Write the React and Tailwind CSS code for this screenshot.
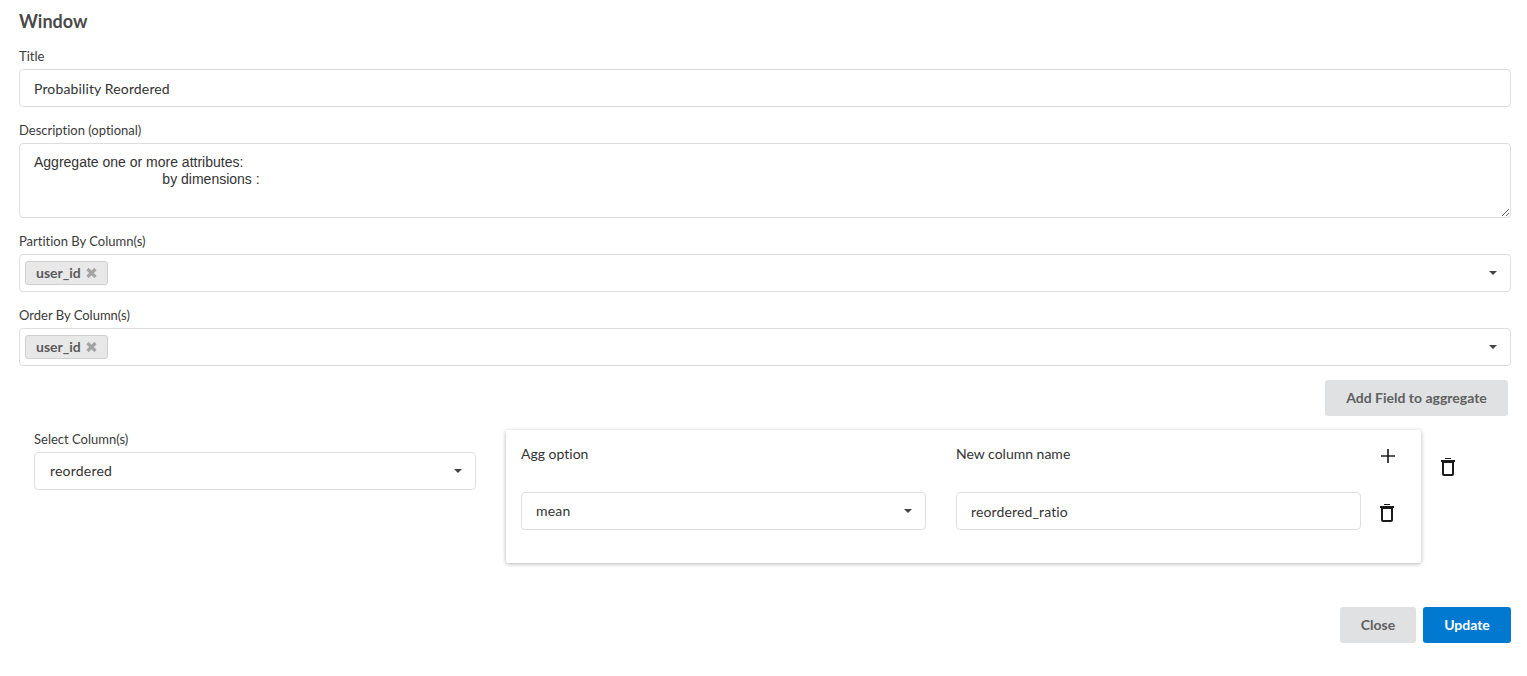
import React from "react";

function Caret() {
  return (
    <svg width="8" height="4" viewBox="0 0 8 4" className="shrink-0">
      <path d="M0 0h8L4 4z" fill="#444" />
    </svg>
  );
}

function Trash() {
  return (
    <svg width="14" height="18" viewBox="0 0 14 18" fill="none" stroke="#1b1b1b" strokeWidth="2">
      <path d="M0 3h14" />
      <path d="M4 .5h6" strokeWidth="1" />
      <path d="M2 4h10v12a1 1 0 0 1-1 1H3a1 1 0 0 1-1-1z" />
    </svg>
  );
}

function Plus() {
  return (
    <svg width="14" height="14" viewBox="0 0 14 14" stroke="#222" strokeWidth="1.7">
      <path d="M7 0v14M0 7h14" />
    </svg>
  );
}

function Label({ children }) {
  return <div className="h-[26px] pt-[4px] text-[13px] leading-[18px] text-[#3a3a3a]">{children}</div>;
}

function Chip() {
  return (
    <span className="flex h-[24px] w-[83px] items-center rounded-[3px] border border-[#cfcfcf] bg-[#e8e8e8] pl-[10px] pb-[1px] text-[14px] font-bold text-[#5b5b5b]">
      user_id
      <svg width="11" height="10" viewBox="0 0 11 10" className="ml-[5px] mt-[1px]" stroke="#a3a3a3" strokeWidth="3.2">
        <path d="M1.5 1l8 8M9.5 1l-8 8" />
      </svg>
    </span>
  );
}

function TagSelect() {
  return (
    <div className="flex h-[38px] items-center justify-between rounded-[4px] border border-[#dedede] pl-[5px] pr-[13px]">
      <Chip />
      <Caret />
    </div>
  );
}

function ValueSelect({ value, className = "" }) {
  return (
    <div className={"flex h-[38px] items-center justify-between rounded-[4px] border border-[#dedede] pr-[13px] text-[14px] text-[#333] tracking-[0.2px] " + className}>
      <span className="pb-[1px]">{value}</span>
      <Caret />
    </div>
  );
}

function TextInput({ value, className = "" }) {
  return (
    <input
      readOnly
      value={value}
      className={"block h-[38px] rounded-[4px] border border-[#dedede] px-[14px] text-[14px] text-[#333] tracking-[0.14px] outline-none " + className}
    />
  );
}

export default function App() {
  return (
    <div className="h-[676px] bg-white pl-[19px] pr-[16px] font-['Lato','Open_Sans',sans-serif] text-[#333] [font-variant-ligatures:none]">
      <h1 className="h-[43px] pt-[10px] text-[18px] leading-[23px] font-bold text-[#4a4a4a]">Window</h1>

      <Label>Title</Label>
      <TextInput value="Probability Reordered" className="w-full" />
      <div className="h-[10px]" />

      <Label>Description (optional)</Label>
      <textarea
        readOnly
        className="block h-[75px] w-full resize-y rounded-[4px] border border-[#dedede] px-[14px] pt-[10px] font-['Liberation_Sans',sans-serif] text-[14px] leading-[17px] text-[#333] outline-none"
        value={"Aggregate one or more attributes: \n                                 by dimensions : "}
      />
      <div className="h-[10px]" />

      <Label>Partition By Column(s)</Label>
      <TagSelect />
      <div className="h-[10px]" />

      <Label>Order By Column(s)</Label>
      <TagSelect />

      <div className="flex justify-end pt-[14px] pr-[3px]">
        <button className="h-[36px] w-[183px] rounded-[3px] bg-[#e0e1e2] pb-[1px] text-[14px] font-bold text-[#5f5f5f]">
          Add Field to aggregate
        </button>
      </div>

      <div className="flex items-start pt-[14px] pl-[15px]">
        <div className="w-[442px]">
          <div className="h-[22px] text-[13px] leading-[18px] text-[#3a3a3a]">Select Column(s)</div>
          <ValueSelect value="reordered" className="pl-[15px]" />
        </div>

        <div className="ml-[30px] h-[133px] w-[915px] rounded-[2px] bg-white pl-[15px] pt-[14px] shadow-[0_1px_4px_rgba(0,0,0,0.3)]">
          <div className="flex h-[48px] items-start">
            <div className="w-[435px] text-[14px] leading-[20px]">Agg option</div>
            <div className="w-[405px] text-[14px] leading-[20px]">New column name</div>
            <div className="ml-[20px] mt-[5px]"><Plus /></div>
          </div>
          <div className="flex items-center">
            <ValueSelect value="mean" className="w-[405px] pl-[14px]" />
            <TextInput value="reordered_ratio" className="ml-[30px] w-[405px]" />
            <div className="ml-[19px] mt-[3px] flex"><Trash /></div>
          </div>
        </div>

        <div className="ml-[20px] mt-[28px] flex"><Trash /></div>
      </div>

      <div className="flex justify-end gap-[7px] pt-[44px]">
        <button className="h-[36px] w-[76px] rounded-[3px] bg-[#e0e1e2] pb-[1px] text-[14px] font-bold text-[#5f5f5f]">Close</button>
        <button className="h-[36px] w-[88px] rounded-[3px] bg-[#0279d1] pb-[1px] text-[14px] font-bold text-white">Update</button>
      </div>
    </div>
  );
}
